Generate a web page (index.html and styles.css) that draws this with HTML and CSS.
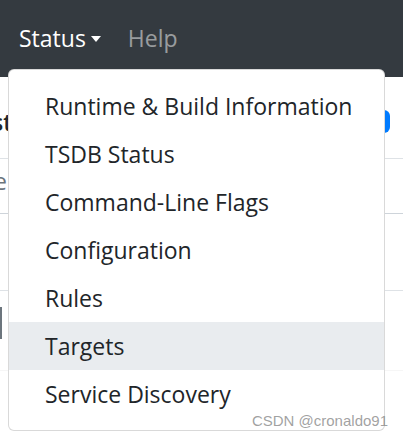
FILE: index.html
```html
<!DOCTYPE html>
<html>
<head>
<meta charset="utf-8">
<link rel="stylesheet" href="styles.css">
</head>
<body>
<div class="page">
  <nav class="navbar">
    <span class="nav-link active">Status<span class="caret"></span></span>
    <span class="nav-link muted">Help</span>
  </nav>
  <div class="content">
    <div class="row row-a">
      <span class="clip-text">st</span>
      <span class="btn-blue"></span>
    </div>
    <div class="row row-b">
      <span class="clip-muted">e</span>
    </div>
    <div class="row row-c"></div>
    <div class="row row-d">
      <span class="dark-bar"></span>
    </div>
  </div>
  <div class="dropdown">
    <div class="item">Runtime &amp; Build Information</div>
    <div class="item">TSDB Status</div>
    <div class="item">Command-Line Flags</div>
    <div class="item">Configuration</div>
    <div class="item">Rules</div>
    <div class="item hover">Targets</div>
    <div class="item">Service Discovery</div>
  </div>
  <div class="watermark">CSDN @cronaldo91</div>
</div>
</body>
</html>
```
FILE: styles.css
```css
html, body {
  margin: 0;
  padding: 0;
  background: #fff;
}
.page {
  position: relative;
  width: 403px;
  height: 437px;
  overflow: hidden;
  font-family: "Open Sans", "Noto Sans", sans-serif;
}
.navbar {
  height: 77px;
  background: #343a40;
  display: flex;
  align-items: flex-start;
  padding: 20px 0 0 19px;
  box-sizing: border-box;
  gap: 27px;
}
.nav-link {
  font-size: 23px;
  line-height: 36px;
  display: flex;
  align-items: center;
}
.nav-link.active { color: #fff; }
.nav-link.muted { color: rgba(255,255,255,0.5); }
.caret {
  width: 0;
  height: 0;
  border-top: 6px solid #fff;
  border-left: 5.5px solid transparent;
  border-right: 5.5px solid transparent;
  margin-left: 5px;
  margin-top: 1px;
}
.content {
  display: flex;
  flex-direction: column;
}
.row {
  box-sizing: border-box;
  display: flex;
  align-items: center;
}
.row-a {
  height: 82px;
  border-bottom: 1px solid #dee2e6;
  justify-content: space-between;
  padding-top: 8px;
}
.clip-text {
  margin-left: -8px;
  font-size: 23px;
  color: #212529;
  font-weight: 600;
}
.btn-blue {
  width: 80px;
  height: 23px;
  background: #007bff;
  border-radius: 6px;
  margin-right: 13px;
}
.row-b {
  height: 55px;
  border-bottom: 1px solid #ced4da;
}
.clip-muted {
  margin-left: -6px;
  font-size: 23px;
  color: #6c757d;
  margin-top: -10px;
}
.row-c {
  height: 77px;
  border-bottom: 1px solid #dee2e6;
}
.row-d {
  height: 80px;
  align-items: flex-start;
  border-bottom: 1px solid #f6f6f6;
}
.dark-bar {
  width: 2px;
  height: 32px;
  background: #6c757d;
  margin-top: 16px;
}
.dropdown {
  position: absolute;
  left: 8px;
  top: 69px;
  width: 375px;
  padding: 12px 0;
  background: #fff;
  border: 1px solid rgba(0,0,0,0.15);
  border-radius: 6px;
}
.item {
  padding: 6px 36px;
  font-size: 23px;
  line-height: 36px;
  color: #212529;
  white-space: nowrap;
}
.item.hover {
  background: #e9ecef;
}
.watermark {
  position: absolute;
  right: 15px;
  bottom: 8px;
  font-family: "Liberation Sans", Arial, sans-serif;
  font-size: 15px;
  color: rgba(130,130,130,0.75);
}
```
